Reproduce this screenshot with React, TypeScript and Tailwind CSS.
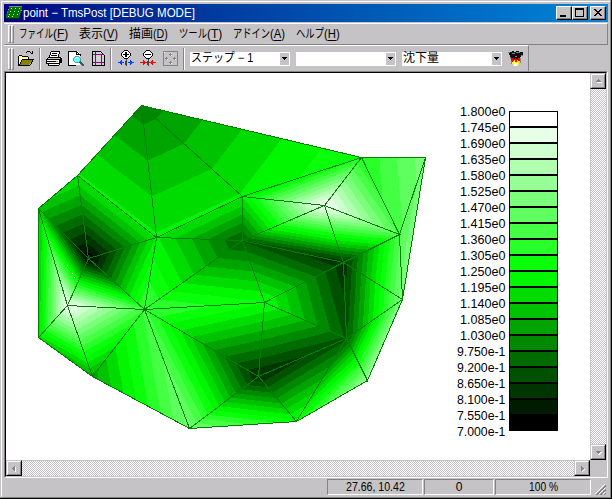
import React, { useLayoutEffect, useRef, useState } from "react";

const COLORS = [
  "#000000", "#001c00", "#003400", "#005000", "#006c00", "#008800", "#00a400", "#00c300", "#00dc00", "#00f700",
  "#0aff0a", "#29ff29", "#44ff44", "#60ff60", "#7bff7b", "#96ff96", "#b2ffb2", "#cfffcf", "#e7ffe7", "#ffffff",
];

const LABELS = [
  "1.800e0", "1.745e0", "1.690e0", "1.635e0", "1.580e0", "1.525e0", "1.470e0", "1.415e0", "1.360e0", "1.305e0", "1.250e0",
  "1.195e0", "1.140e0", "1.085e0", "1.030e0", "9.750e-1", "9.200e-1", "8.650e-1", "8.100e-1", "7.550e-1", "7.000e-1",
];

type Node = [number, number, number];

// x, y, value expressed in legend bands (0 = 7.000e-1, 20 = 1.800e0)
const NODES: Record<string, Node> = {
  A: [141.5, 105.5, 5.47], B: [77.5, 175.5, 9.1], C: [38.5, 208.5, 7.5], D: [88.5, 258.5, 0.3],
  E: [156.5, 237.5, 9.14], F: [67.5, 305.5, 19.5], G: [38.5, 337.5, 8.5], H: [92.5, 376.5, 6.5],
  I: [144.5, 309.5, 12.2], J: [189.5, 428.5, 14.3], K: [242.5, 196.5, 9.1], L: [361.5, 157.5, 11],
  M: [425.5, 157.5, 14.6], N: [399.5, 234.5, 12.8], O: [324.5, 205.5, 19.5], P: [242.5, 240.5, 3.9],
  Q: [343.5, 262.5, 2.2], R: [402.5, 299.5, 14.8], S: [264.5, 302.5, 10.1], T: [346.5, 338.5, 3.8],
  U: [367.5, 380.5, 15.8], V: [296.5, 421.5, 10.3], W: [258.5, 376.5, 2.0],
};

const TRIANGLES = [
  "ABE", "AEK", "AKL", "BCD", "BDE", "CDF", "CFG", "FGH", "FHI", "DFI", "DEI", "EIP", "EKP", "IPS", "ISW", "IWJ",
  "IHJ", "JWV", "WVT", "VTU", "TUR", "TQR", "SQT", "STW", "PQS", "POQ", "PKO", "KLO", "LON", "LMN", "MNR", "NQR", "ONQ",
];

function clipAbove(poly: Node[], level: number): Node[] {
  const out: Node[] = [];
  poly.forEach((a, i) => {
    const b = poly[(i + 1) % poly.length];
    if (a[2] >= level) out.push(a);
    if (a[2] >= level !== b[2] >= level) {
      const k = (level - a[2]) / (b[2] - a[2]);
      out.push([a[0] + (b[0] - a[0]) * k, a[1] + (b[1] - a[1]) * k, level]);
    }
  });
  return out;
}

const toPoints = (poly: Node[]) => poly.map((p) => `${p[0].toFixed(2)},${p[1].toFixed(2)}`).join(" ");

function Contour() {
  const triangles = TRIANGLES.map((t) => t.split("").map((c) => NODES[c]));
  return (
    <svg width="440" height="387" viewBox="6 73 440 387" shapeRendering="crispEdges" className="block shrink-0">
      {triangles.map((tri, i) =>
        COLORS.map((color, level) => {
          const poly = level === 0 ? tri : clipAbove(tri, level);
          return poly.length > 2 ? <polygon key={`${i}-${level}`} points={toPoints(poly)} fill={color} /> : null;
        })
      )}
      {triangles.map((tri, i) => (
        <polygon key={i} points={toPoints(tri)} fill="none" stroke="#008200" strokeWidth="1" />
      ))}
      <path d="M67 265h1v1h-1zM72 273h1v1h-1zM74 277h1v1h-1zM77 281h1v1h-1z" fill="#fff" />
    </svg>
  );
}

function Fit({ w, children }: { w: number; children: React.ReactNode }) {
  const ref = useRef<HTMLSpanElement>(null);
  const [scale, setScale] = useState(1);
  useLayoutEffect(() => {
    if (ref.current) setScale(w / ref.current.offsetWidth);
  }, [w]);
  return (
    <span className="inline-block whitespace-nowrap" style={{ width: w }}>
      <span ref={ref} className="inline-block origin-left" style={{ transform: `scaleX(${scale})` }}>
        {children}
      </span>
    </span>
  );
}

function MenuItem({ text, hot, w, hw = 15 }: { text: string; hot: string; w: number; hw?: number }) {
  return (
    <div className="mr-[11px] flex">
      <Fit w={w}>{text}</Fit>
      <Fit w={hw}>
        (<span className="underline underline-offset-2">{hot}</span>)
      </Fit>
    </div>
  );
}

function Grip() {
  return (
    <div className="flex shrink-0 gap-0">
      <div className="w-[3px] border border-t-white border-l-white border-r-[#848284] border-b-[#848284]" />
      <div className="w-[3px] border border-t-white border-l-white border-r-[#848284] border-b-[#848284]" />
    </div>
  );
}

const Separator = () => <div className="h-[22px] w-[2px] shrink-0 border-l border-l-[#848284] bg-white" />;

function Combo({ text, w = 0 }: { text?: string; w?: number }) {
  return (
    <div className="flex h-[14px] w-[100px] shrink-0 items-center bg-white p-[1px]">
      <div className="flex h-[12px] flex-1 items-center pb-[2px]">{text && <Fit w={w}>{text}</Fit>}</div>
      <div className="flex h-[12px] w-[9px] items-center justify-center bg-[#c6c3c6]">
        <svg width="5" height="3" shapeRendering="crispEdges"><path d="M0 0h5v1H0zM1 1h3v1H1zM2 2h1v1H2z" /></svg>
      </div>
    </div>
  );
}

function WinButton({ children }: { children: React.ReactNode }) {
  return (
    <div className="h-[14px] w-[16px] border border-t-white border-l-white border-r-black border-b-black bg-[#c6c3c6]">
      <div className="h-full w-full border-r border-b border-[#848284]">
        <svg width="13" height="11" shapeRendering="crispEdges" className="block">{children}</svg>
      </div>
    </div>
  );
}

function ScrollButton({ d, shade }: { d: string; shade: string }) {
  return (
    <div className="h-[16px] w-[16px] shrink-0 border border-t-[#c6c3c6] border-l-[#c6c3c6] border-r-black border-b-black bg-[#c6c3c6]">
      <div className="h-full w-full border border-t-white border-l-white border-r-[#848284] border-b-[#848284]">
        <svg width="12" height="12" shapeRendering="crispEdges" className="block">
          <path d={shade} fill="#fff" />
          <path d={d} fill="#848284" />
        </svg>
      </div>
    </div>
  );
}

function Icon({ w = 16, children }: { w?: number; children: React.ReactNode }) {
  return (
    <svg width={w} height="17" viewBox={`0 0 ${w} 17`} shapeRendering="crispEdges" className="block shrink-0">
      {children}
    </svg>
  );
}

const DITHER = "bg-[repeating-conic-gradient(#c6c3c6_0_25%,#ffffff_0_50%)] bg-[length:2px_2px]";
const PANE = "flex h-[16px] items-center justify-center border border-t-[#848284] border-l-[#848284] border-r-white border-b-white";

export default function App() {
  return (
    <div className="h-[499px] w-[612px] overflow-hidden border-r border-b border-black bg-[#c6c3c6] font-['Liberation_Sans','Noto_Sans_CJK_JP',sans-serif] text-[12px] leading-[14px] text-black">
      <div className="h-full border border-t-[#c6c3c6] border-l-[#c6c3c6] border-r-[#848284] border-b-[#848284]">
        <div className="flex h-full flex-col border-t border-l border-white pt-[2px] pr-[2px] pl-[2px]">
          <div className="flex h-[18px] shrink-0 items-center bg-linear-to-r from-[#000082] to-[#1086d6] pr-[2px] pl-[2px] text-white">
            <svg width="16" height="16" shapeRendering="crispEdges" className="block shrink-0">
              <path d="M3 2h13v3h-1v3h-1v4h-1v1H0V9h1V6h1V4h1z" fill="#007500" />
              <path d="M3 1h13v1H3zM2 4h1v1H2zM14 5h2v1h-2zM1 7h1v1H1zM13 8h1v1h-1z" fill="#848284" />
              <path d="M5 3h1v1H5zM9 3h1v1H9zM13 3h1v1h-1zM4 6h1v1H4zM8 6h1v1H8zM12 6h1v1h-1zM3 9h1v1H3zM7 9h1v1H7zM11 9h1v1h-1zM2 11h1v1H2zM6 11h1v1H6z" fill="#d6f7d6" />
              <path d="M0 13h13v1H0z" fill="#002800" />
            </svg>
            <div className="ml-[1px] flex-1"><Fit w={172}>point − TmsPost [DEBUG MODE]</Fit></div>
            <WinButton><path d="M3 8h6v2H3z" /></WinButton>
            <WinButton><path d="M2 1h9v9H2zM3 3v6h7V3z" fillRule="evenodd" /></WinButton>
            <div className="w-[2px]" />
            <WinButton><path d="M3 2h2v1h1v1h2V3h1V2h2v1h-1v1H9v1H8v1h1v1h1v1h1v1H9V8H8V7H6v1H5v1H3V8h1V7h1V6h1V5H5V4H4V3H3z" /></WinButton>
          </div>

          <div className="mt-[1px] flex h-[22px] shrink-0 items-center border border-t-white border-l-[#c6c3c6] border-r-[#848284] border-b-[#848284] py-[2px] pl-[3px]">
            <div className="flex h-[18px]"><Grip /></div>
            <div className="w-[5px]" />
            <MenuItem text="ファイル" hot="F" w={34} />
            <MenuItem text="表示" hot="V" w={24} />
            <MenuItem text="描画" hot="D" w={24} />
            <MenuItem text="ツール" hot="T" w={28} />
            <MenuItem text="アドイン" hot="A" w={37} />
            <MenuItem text="ヘルプ" hot="H" w={28} hw={16} />
          </div>

          <div className="flex h-[26px] w-[525px] shrink-0 items-center border-t border-r border-t-white border-r-[#848284] pl-[4px]">
            <div className="flex h-[22px]"><Grip /></div>
            <div className="w-[3px]" />
            <Icon w={18}>
              <path d="M1 6h4l1 1h6v3H5l-3 5H1z" fill="#ffff9c" />
              <path d="M2 5h3v1H2zM1 6h1v9H1zM5 6h6v1H5zM11 7h1v2h-1zM5 9h12v1H5zM10 1h3v1h-3zM13 2h1v1h-1zM14 3h2v1h-2zM15 1h1v3h-1zM9 2h1v1H9z" />
              <path d="M5 10h11v1h-1v1h-1v1h-1v1h-1v1H2v-1h1v-1h1v-1h1z" fill="#848200" />
              <path d="M1 15h12v1H1zM13 14h1v1h-1zM14 12h1v2h-1zM15 10h1v2h-1zM2 14h1v1H2zM3 12h1v2H3zM4 10h1v2H4z" />
            </Icon>
            <div className="w-[4px]" />
            <Separator />
            <div className="w-[5px]" />
            <Icon>
              <path d="M5 1h9v1H5zM4 2h1v3H4zM13 2h1v2h-1zM12 4h1v3h-1zM3 5h1v2H3zM2 7h12v1H2zM1 8h1v1H1zM14 7h1v1h-1zM0 9h14v1H0zM0 10h1v4H0zM14 8h2v5h-2zM1 13h13v1H1zM2 14h1v2H2zM3 15h10v1H3zM13 13h1v2h-1z" />
              <path d="M5 2h8v2h-1v3H4V5h1zM1 10h13v3H1zM3 14h10v1H3z" fill="#fff" />
              <path d="M6 3h5v1H6zM5 5h6v1H5zM1 11h9v1H1zM13 10h1v3h-1z" />
              <path d="M10 11h2v1h-2z" fill="#c6c300" />
            </Icon>
            <div className="w-[6px]" />
            <Icon>
              <path d="M1 1h8l3 3v11H1z" fill="#fff" />
              <path d="M0 1h9v1H0zM0 1h1v14H0zM9 2h1v1H9zM10 3h1v1h-1zM8 2h1v3H8zM9 4h4v1H9zM12 5h1v1h-1zM0 15h8v1H0z" />
              <path d="M7 6h4v1h1v1h1v3h-1v1h-1v1H7v-1H6v-1H5V8h1V7h1z" fill="#639a9c" />
              <path d="M7 7h4v1h1v3h-1v1H7v-1H6V8h1z" fill="#63ffff" />
              <path d="M8 7h2v1H8zM7 8h1v1H7z" fill="#fff" />
              <path d="M12 11h1v1h1v1h1v1h1v2h-2v-1h-1v-1h-1v-1h-1v-1h1z" fill="#316163" />
            </Icon>
            <div className="w-[8px]" />
            <Icon w={13}>
              <path d="M1 2h8l3 3v10H1z" fill="#d6cfd6" />
              <path d="M0 1h9v1H0zM0 2h1v13H0zM9 2h1v1H9zM10 3h1v1h-1zM11 4h1v1h-1zM12 5h1v10h-1zM0 15h13v1H0z" />
              <path d="M3 2h1v13H3zM9 4h1v11H9zM1 4h10v1H1zM1 12h11v1H1z" fill="#840084" />
            </Icon>
            <div className="w-[5px]" />
            <Separator />
            <div className="w-[6px]" />
            {["in", "out"].map((kind) => (
              <div key={kind} className="mr-[5px]">
                <Icon w={17}>
                  <path d="M6 0h4v1h1v1h1v1h1v3h-1v1h-1v1h-1v1H6V8H5V7H4V6H3V3h1V2h1V1h1z" />
                  <path d="M6 1h4v1h1v1h1v3h-1v1h-1v1H6V7H5V6H4V3h1V2h1z" fill="#fff" />
                  <path d={kind === "in" ? "M5 4h6v1H5zM7 2h2v5H7z" : "M5 4h6v1H5z"} />
                  <path d="M8 9h1v7H8zM7 11h1v4H7z" fill="#444" />
                  {kind === "in" ? (
                    <path d="M0 12h2v-1h1v-1h1v2h2v1H4v2H3v-1H2v-1H0zM16 12h-2v-1h-1v-1h-1v2h-2v1h2v2h1v-1h1v-1h2z" fill="#0041ff" />
                  ) : (
                    <path d="M0 12h3v-2h1v1h1v1h2v1H5v1H4v1H3v-2H0zM16 12h-3v-2h-1v1h-1v1h-2v1h2v1h1v1h1v-2h3z" fill="#ff0000" />
                  )}
                </Icon>
              </div>
            ))}
            <div className="w-[1px]" />
            <Icon w={15}>
              <path d="M0 1h15v15H0zM1 2v13h13V2z" fillRule="evenodd" fill="#848284" />
              <path d="M7 3h1v3H7zM7 11h1v3H7zM2 8h3v1H2zM10 8h3v1h-3zM6 4h3v1H6zM6 12h3v1H6zM3 7h1v3H3zM11 7h1v3h-1z" fill="#848284" />
              <path d="M8 3h1v1H8zM8 5h1v1H8zM4 9h1v1H4zM12 9h1v1h-1zM8 13h1v1H8zM1 2h1v1H1z" fill="#fff" />
            </Icon>
            <div className="w-[5px]" />
            <Separator />
            <div className="w-[5px]" />
            <Combo text="ステップ − 1" w={62} />
            <div className="w-[6px]" />
            <Combo />
            <div className="w-[6px]" />
            <Combo text="沈下量" w={36} />
            <div className="w-[6px]" />
            <Icon w={15}>
              <path d="M1 2h3V1h2v1h2V1h3v1h4v3h-2v2h-1v2h-1v1H4V9H3V7H2V5H1z" fill="#101010" />
              <path d="M0 2h2v1H0zM4 3h3v1H4zM8 2h4v1H8zM13 5h2v1h-2zM7 6h2v1H7zM2 7h1v2H2zM12 8h1v5h-1zM3 11h1v3H3z" fill="#848284" />
              <path d="M3 8h2v1h2V8h1v1h2V8h2v3h-1v2H4v-2H3z" fill="#ff0000" />
              <path d="M4 12h1v-1h1v-1h1v2h2v-2h1v1h1v4h-1v1H5v-2H4z" fill="#ffff00" />
              <path d="M6 13h1v-1h1v1h1v3H6z" fill="#fff" />
              <path d="M5 8h1v2H5zM9 8h1v2H9z" fill="#840000" />
            </Icon>
          </div>

          <div className="h-[407px] w-[604px] shrink-0 border border-t-[#848284] border-l-[#848284] border-r-white border-b-white">
            <div className="grid h-full grid-cols-[584px_16px] grid-rows-[387px_16px] border border-t-black border-l-black border-r-[#c6c3c6] border-b-[#c6c3c6]">
              <div className="flex bg-white">
                <Contour />
                <div className="w-[59px] shrink-0 pt-[31px]">
                  {LABELS.map((label) => (
                    <div key={label} className="flex h-[16px] justify-end text-[12px] leading-[17px]">
                      <Fit w={label.length === 7 ? 45 : 48}>{label}</Fit>
                    </div>
                  ))}
                </div>
                <div className="ml-[4px] w-[49px] pt-[38px]">
                  {[...COLORS].reverse().map((c) => (
                    <div key={c} className="h-[16px] border border-black" style={{ backgroundColor: c }} />
                  ))}
                </div>
              </div>
              <div className={`flex flex-col justify-between border-l border-[#c6c3c6] ${DITHER}`}>
                <div className="-ml-[1px]"><ScrollButton d="M6 4h1v1h1v1h1v1H4V6h1V5h1z" shade="M5 7h5v1H5z" /></div>
                <div className="-ml-[1px]"><ScrollButton d="M4 5h5v1H8v1H7v1H6V7H5V6H4z" shade="M8 6h2v1H9v1H8v1H6V8h1V7h1z" /></div>
              </div>
              <div className={`flex justify-between border-t border-[#c6c3c6] ${DITHER}`}>
                <div className="-mt-[1px]"><ScrollButton d="M4 6h1V5h1V4h1v5H6V8H5V7H4z" shade="M7 5h1v5H7z" /></div>
                <div className="-mt-[1px]"><ScrollButton d="M5 4h1v1h1v1h1v1H7v1H6v1H5z" shade="M8 7h1v1H8v1H7v1H6V9h1V8h1z" /></div>
              </div>
              <div className="bg-[#c6c3c6]" />
            </div>
          </div>

          <div className="flex flex-1 items-start justify-end pt-[1px] text-[12px]">
            <div className={`mr-[1px] w-[96px] ${PANE}`}><Fit w={59}>27.66, 10.42</Fit></div>
            <div className={`mr-[1px] w-[70px] ${PANE}`}>0</div>
            <div className={`w-[96px] ${PANE}`}><Fit w={29}>100 %</Fit></div>
            <svg width="17" height="18" className="block shrink-0" shapeRendering="crispEdges">
              <path d="M4 15L14 5M8 15L14 9M12 15L14 13" stroke="#fff" />
              <path d="M5 16L15 6M6 16L15 7M9 16L15 10M10 16L15 11M13 16L15 14" stroke="#848284" />
            </svg>
          </div>
        </div>
      </div>
    </div>
  );
}
